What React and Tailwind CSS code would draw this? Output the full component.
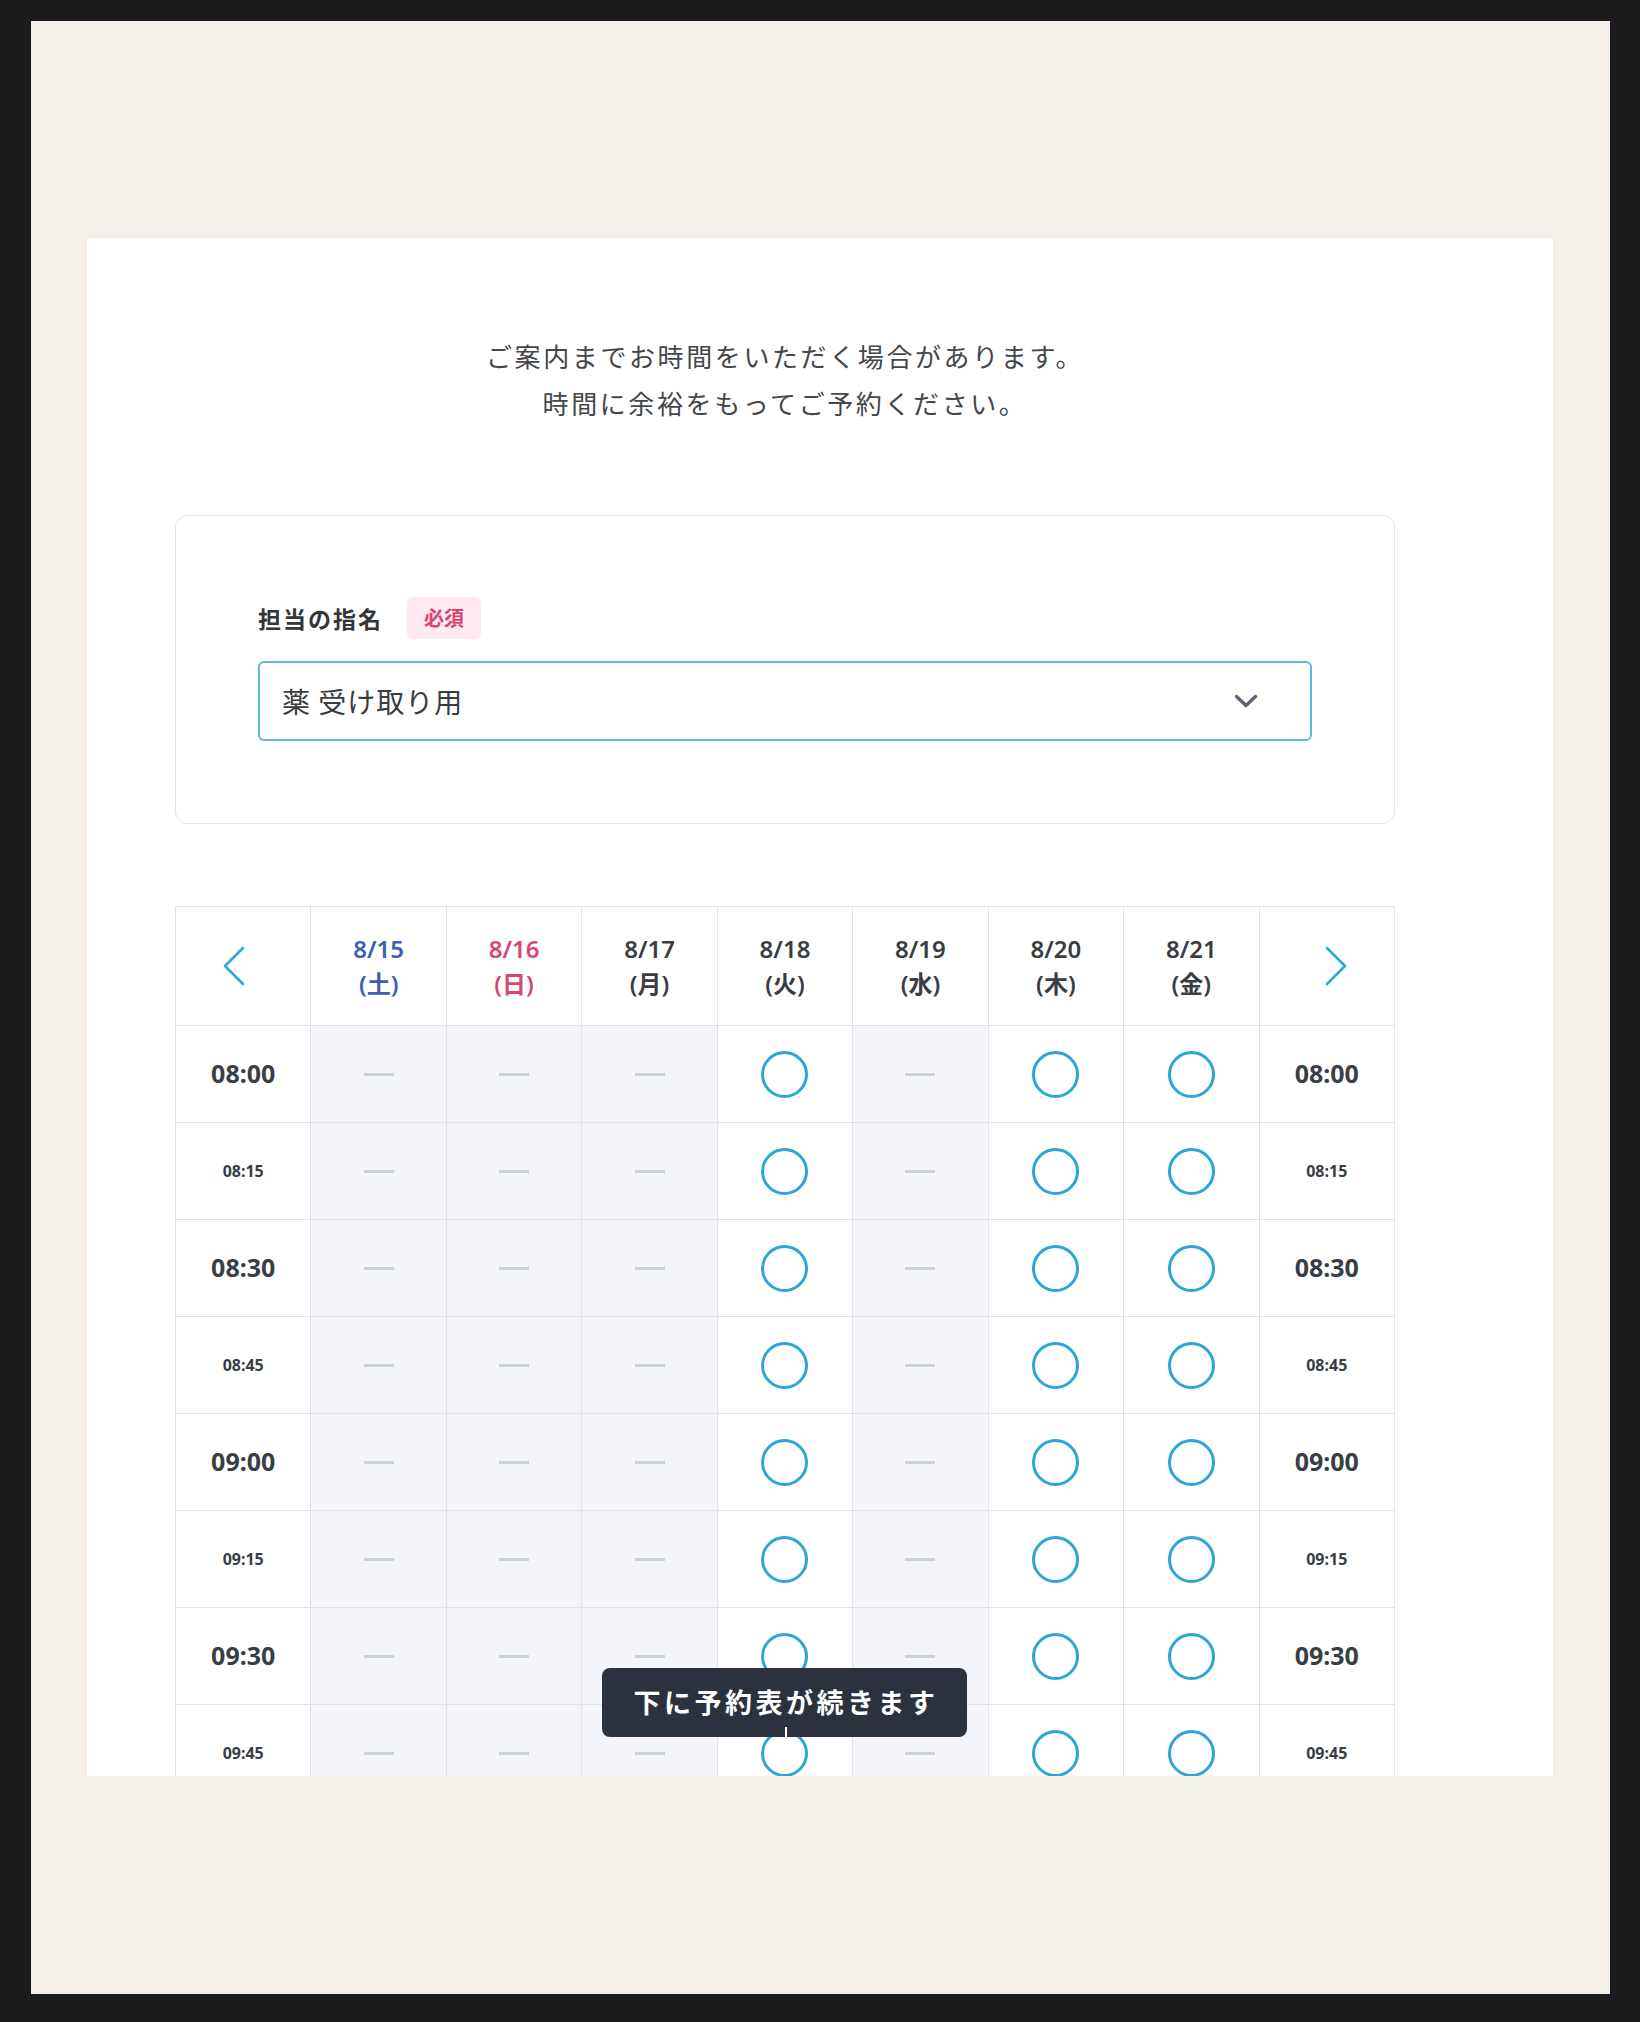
import React from "react";

const days = [
  { date: "8/15", wd: "土", color: "text-[#3b5fb3]", open: false },
  { date: "8/16", wd: "日", color: "text-[#d9466f]", open: false },
  { date: "8/17", wd: "月", color: "text-[#3a3d42]", open: false },
  { date: "8/18", wd: "火", color: "text-[#3a3d42]", open: true },
  { date: "8/19", wd: "水", color: "text-[#3a3d42]", open: false },
  { date: "8/20", wd: "木", color: "text-[#3a3d42]", open: true },
  { date: "8/21", wd: "金", color: "text-[#3a3d42]", open: true },
];

const times = ["08:00", "08:15", "08:30", "08:45", "09:00", "09:15", "09:30", "09:45", "10:00", "10:15"];

function TimeCell({ t }) {
  const major = t.endsWith(":00") || t.endsWith(":30");
  return (
    <div className="h-[97px] flex items-center justify-center border-r border-b border-[#dfe2ea] bg-white">
      <span className={major ? "text-[25px] font-bold text-[#393d44]" : "text-[16px] font-bold text-[#393d44]"}>
        {t}
      </span>
    </div>
  );
}

function SlotCell({ open }) {
  if (open) {
    return (
      <div className="h-[97px] flex items-center justify-center border-r border-b border-[#dfe2ea] bg-white">
        <div className="w-[47px] h-[47px] rounded-full border-[3px] border-[#2ba6d6]" />
      </div>
    );
  }
  return (
    <div className="h-[97px] flex items-center justify-center border-r border-b border-[#dfe2ea] bg-[#f4f5fa]">
      <div className="w-[30px] h-[3px] bg-[#cdd1da]" />
    </div>
  );
}

function Arrow({ dir }) {
  return (
    <svg width="24" height="40" viewBox="0 0 24 40" fill="none">
      <path
        d={dir === "left" ? "M21 2 L3 20 L21 38" : "M3 2 L21 20 L3 38"}
        stroke="#2fa9d8"
        strokeWidth="2.6"
        strokeLinecap="round"
        strokeLinejoin="round"
      />
    </svg>
  );
}

export default function App() {
  return (
    <div
      className="w-[1640px] h-[2022px] bg-[#1c1c1f] pt-[21px] pl-[31px] pr-[30px] pb-[28px]"
      style={{ fontFamily: '"Noto Sans", "Noto Sans CJK JP", sans-serif' }}
    >
      <div className="h-full bg-[#f5efe9] pt-[217px] pl-[56px] pr-[57px]">
        <div className="relative h-[1538px] bg-white overflow-hidden shadow-[0_-2px_8px_rgba(0,0,0,0.03)]">
          <div className="w-[1220px] ml-[88px] pt-[94px]">
            <p
              className="text-center text-[26px] leading-[47px] tracking-[2.6px] text-[#44464a]"
              style={{ fontFamily: '"Noto Sans CJK JP", sans-serif' }}
            >
              ご案内までお時間をいただく場合があります。
              <br />
              時間に余裕をもってご予約ください。
            </p>

            <div className="mt-[89px] border border-[#e3e3e3] rounded-[12px] pt-[81px] pb-[82px] px-[82px]">
              <div className="flex items-center h-[42px] mb-[22px]" style={{ fontFamily: '"Noto Sans CJK JP", sans-serif' }}>
                <span className="text-[23px] font-bold tracking-[2px] text-[#333539]">担当の指名</span>
                <span className="ml-[24px] h-[42px] px-[17px] flex items-center rounded-[6px] bg-[#fde9ef] text-[20px] font-bold text-[#d9436f]">
                  必須
                </span>
              </div>
              <div className="h-[80px] border-2 border-[#5bbcd5] rounded-[6px] flex items-center justify-between pl-[22px] pr-[52px]">
                <span className="text-[28px] tracking-[1px] text-[#3a3c40]" style={{ fontFamily: '"Noto Sans CJK JP", sans-serif' }}>
                  薬 受け取り用
                </span>
                <svg width="24" height="14" viewBox="0 0 24 14" fill="none">
                  <path d="M2.5 2.5 L12 11.5 L21.5 2.5" stroke="#5b6275" strokeWidth="3.4" strokeLinecap="round" strokeLinejoin="round" />
                </svg>
              </div>
            </div>

            <div className="mt-[82px] grid grid-cols-9 border-l border-t border-[#dfe2ea]">
              <div className="h-[119px] flex items-center justify-center pr-[18px] border-r border-b border-[#dfe2ea]">
                <Arrow dir="left" />
              </div>
              {days.map((d) => (
                <div
                  key={d.date}
                  className={"h-[119px] flex flex-col items-center justify-center border-r border-b border-[#dfe2ea] text-[24px] font-semibold leading-[35px] " + d.color}
                >
                  <span>{d.date}</span>
                  <span>({d.wd})</span>
                </div>
              ))}
              <div className="h-[119px] flex items-center justify-center pl-[18px] border-r border-b border-[#dfe2ea]">
                <Arrow dir="right" />
              </div>

              {times.map((t) => (
                <React.Fragment key={t}>
                  <TimeCell t={t} />
                  {days.map((d) => (
                    <SlotCell key={d.date} open={d.open} />
                  ))}
                  <TimeCell t={t} />
                </React.Fragment>
              ))}
            </div>
          </div>

          <div
            className="absolute left-[515px] bottom-[39px] w-[365px] h-[69px] rounded-[8px] bg-[#2b323d] flex items-center justify-center"
            style={{ fontFamily: '"Noto Sans CJK JP", sans-serif' }}
          >
            <span className="text-[27px] font-bold tracking-[3.5px] text-white pl-[3px]">下に予約表が続きます</span>
            <div className="absolute left-1/2 bottom-0 w-[2px] h-[10px] bg-white" />
          </div>
        </div>
      </div>
    </div>
  );
}
